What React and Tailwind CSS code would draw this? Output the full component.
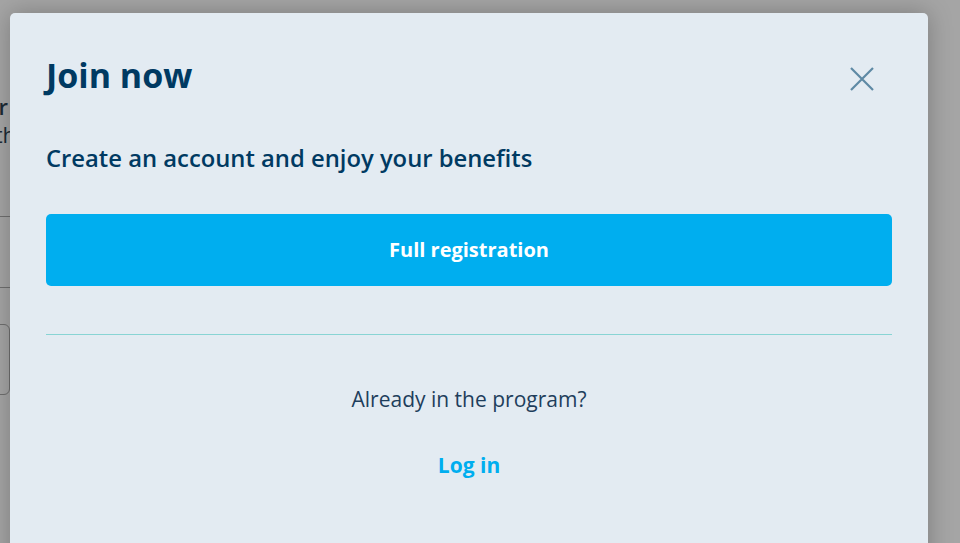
export default function App() {
  return (
    <div className="relative h-[543px] w-[960px] overflow-hidden bg-[#a5a5a5] font-['Open_Sans',sans-serif]">
      {/* page behind the overlay, only its right edge shows */}
      <div className="-ml-[290px] w-[300px] pt-[92px] text-[#1d2b36]">
        <div className="pr-[2px] text-right text-[22px] font-semibold leading-[28px]">Your member</div>
        <div className="-mr-[6px] text-right text-[22px] leading-[28px]">Sign in with</div>
        <div className="mt-[68px] h-px bg-[#6f6f6f]" />
        <div className="mt-[70px] h-px bg-[#6f6f6f]" />
        <div className="mt-[36px] h-[71px] rounded-md border border-[#6f6f6f]" />
      </div>

      <div className="absolute left-[10px] top-[13px] h-[560px] w-[918px] rounded-[5px] bg-[#e3ebf2] px-9 pt-[38px] shadow-[0_0_24px_rgba(0,0,0,0.25)]">
        <div className="flex items-start justify-between">
          <h1 className="text-[34px] font-bold leading-[48px] text-[#003a62]">Join now</h1>
          <button className="mr-[18px] mt-[16px] text-[#5e89a4]">
            <svg width="24" height="24" viewBox="0 0 24 24" fill="none" stroke="currentColor" strokeWidth="2.2">
              <path d="M1 1L23 23M23 1L1 23" />
            </svg>
          </button>
        </div>
        <p className="mt-[43px] text-[23.8px] font-semibold leading-[32px] text-[#003a62]">
          Create an account and enjoy your benefits
        </p>
        <button className="mt-[40px] flex h-[72px] w-full items-center justify-center rounded-[5px] bg-[#00aeef] text-[20px] font-bold text-white">
          Full registration
        </button>
        <div className="mt-[48px] border-t border-[#88d4d4]" />
        <p className="mt-[49px] text-center text-[21px] leading-[30px] text-[#1e3e5c]">Already in the program?</p>
        <div className="mt-[36px] text-center text-[21px] font-bold leading-[30px] text-[#00aeef]">Log in</div>
      </div>
    </div>
  )
}
